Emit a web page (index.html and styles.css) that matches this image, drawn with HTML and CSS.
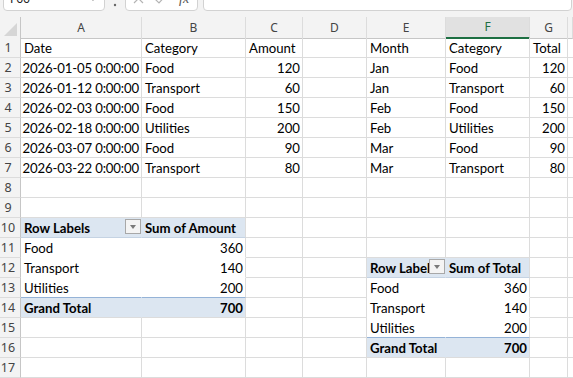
FILE: index.html
```html
<!DOCTYPE html>
<html>
<head>
  <title>Book1 - Excel</title>
  <link rel="stylesheet" href="styles.css">
</head>
<body>
  <div class="toolbar">
    <div class="namebox">
      <span>F66</span>
      <svg class="chev" width="8" height="6" viewBox="0 0 8 6"><path d="M1 1 L4 4 L7 1" fill="none" stroke="#555" stroke-width="1.2"/></svg>
    </div>
    <svg class="dots" width="6" height="24" viewBox="0 0 6 24"><circle cx="3" cy="10" r="1.2" fill="#666"/><circle cx="3" cy="18" r="1.2" fill="#666"/></svg>
    <div class="fxbox">
      <svg width="72" height="24" viewBox="0 0 72 24">
        <path d="M8 7 L17 16 M17 7 L8 16" stroke="#b4b4b4" stroke-width="1.2" fill="none"/>
        <path d="M29 12 L33 16 L41 7" stroke="#b4b4b4" stroke-width="1.2" fill="none"/>
        <text x="53" y="16" class="fx">fx</text>
      </svg>
    </div>
    <div class="formula"></div>
  </div>

  <div class="sheet">
    <div class="row head">
      <div class="corner"><svg width="13" height="13" viewBox="0 0 13 13"><path d="M13 0 L13 13 L0 13 Z" fill="#d6d6d6"/></svg></div>
      <div class="col">A</div>
      <div class="col">B</div>
      <div class="col">C</div>
      <div class="col">D</div>
      <div class="col">E</div>
      <div class="col sel">F</div>
      <div class="col">G</div>
      <div class="col"></div>
    </div>

    <div class="row">
      <div class="rn">1</div>
      <div class="c">Date</div><div class="c">Category</div><div class="c">Amount</div><div class="c"></div>
      <div class="c">Month</div><div class="c">Category</div><div class="c">Total</div><div class="c"></div>
    </div>
    <div class="row">
      <div class="rn">2</div>
      <div class="c num date">2026-01-05 0:00:00</div><div class="c">Food</div><div class="c num">120</div><div class="c"></div>
      <div class="c">Jan</div><div class="c">Food</div><div class="c num">120</div><div class="c"></div>
    </div>
    <div class="row">
      <div class="rn">3</div>
      <div class="c num date">2026-01-12 0:00:00</div><div class="c">Transport</div><div class="c num">60</div><div class="c"></div>
      <div class="c">Jan</div><div class="c">Transport</div><div class="c num">60</div><div class="c"></div>
    </div>
    <div class="row">
      <div class="rn">4</div>
      <div class="c num date">2026-02-03 0:00:00</div><div class="c">Food</div><div class="c num">150</div><div class="c"></div>
      <div class="c">Feb</div><div class="c">Food</div><div class="c num">150</div><div class="c"></div>
    </div>
    <div class="row">
      <div class="rn">5</div>
      <div class="c num date">2026-02-18 0:00:00</div><div class="c">Utilities</div><div class="c num">200</div><div class="c"></div>
      <div class="c">Feb</div><div class="c">Utilities</div><div class="c num">200</div><div class="c"></div>
    </div>
    <div class="row">
      <div class="rn">6</div>
      <div class="c num date">2026-03-07 0:00:00</div><div class="c">Food</div><div class="c num">90</div><div class="c"></div>
      <div class="c">Mar</div><div class="c">Food</div><div class="c num">90</div><div class="c"></div>
    </div>
    <div class="row">
      <div class="rn">7</div>
      <div class="c num date">2026-03-22 0:00:00</div><div class="c">Transport</div><div class="c num">80</div><div class="c"></div>
      <div class="c">Mar</div><div class="c">Transport</div><div class="c num">80</div><div class="c"></div>
    </div>
    <div class="row">
      <div class="rn">8</div>
      <div class="c"></div><div class="c"></div><div class="c"></div><div class="c"></div>
      <div class="c"></div><div class="c"></div><div class="c"></div><div class="c"></div>
    </div>
    <div class="row">
      <div class="rn">9</div>
      <div class="c"></div><div class="c"></div><div class="c"></div><div class="c"></div>
      <div class="c"></div><div class="c"></div><div class="c"></div><div class="c"></div>
    </div>
    <div class="row">
      <div class="rn">10</div>
      <div class="c pv-head pv-left">Row Labels<span class="dd"></span></div><div class="c pv-head">Sum of Amount</div><div class="c"></div><div class="c"></div>
      <div class="c"></div><div class="c"></div><div class="c"></div><div class="c"></div>
    </div>
    <div class="row">
      <div class="rn">11</div>
      <div class="c pv pv-left">Food</div><div class="c pv num">360</div><div class="c"></div><div class="c"></div>
      <div class="c"></div><div class="c"></div><div class="c"></div><div class="c"></div>
    </div>
    <div class="row">
      <div class="rn">12</div>
      <div class="c pv pv-left">Transport</div><div class="c pv num">140</div><div class="c"></div><div class="c"></div>
      <div class="c pv-head pv-left">Row Labels<span class="dd"></span></div><div class="c pv-head">Sum of Total</div><div class="c"></div><div class="c"></div>
    </div>
    <div class="row">
      <div class="rn">13</div>
      <div class="c pv pv-left pv-last">Utilities</div><div class="c pv pv-last num">200</div><div class="c"></div><div class="c"></div>
      <div class="c pv pv-left">Food</div><div class="c pv num">360</div><div class="c"></div><div class="c"></div>
    </div>
    <div class="row">
      <div class="rn">14</div>
      <div class="c pv-total pv-left">Grand Total</div><div class="c pv-total num">700</div><div class="c"></div><div class="c"></div>
      <div class="c pv pv-left">Transport</div><div class="c pv num">140</div><div class="c"></div><div class="c"></div>
    </div>
    <div class="row">
      <div class="rn">15</div>
      <div class="c"></div><div class="c"></div><div class="c"></div><div class="c"></div>
      <div class="c pv pv-left pv-last">Utilities</div><div class="c pv pv-last num">200</div><div class="c"></div><div class="c"></div>
    </div>
    <div class="row">
      <div class="rn">16</div>
      <div class="c"></div><div class="c"></div><div class="c"></div><div class="c"></div>
      <div class="c pv-total pv-left">Grand Total</div><div class="c pv-total num">700</div><div class="c"></div><div class="c"></div>
    </div>
    <div class="row">
      <div class="rn">17</div>
      <div class="c"></div><div class="c"></div><div class="c"></div><div class="c"></div>
      <div class="c"></div><div class="c"></div><div class="c"></div><div class="c"></div>
    </div>
  </div>
</body>
</html>
```

FILE: styles.css
```css
body {
  margin: 0;
  background: #f3f3f3;
  overflow: hidden;
  font-family: "Lato", "Liberation Sans", sans-serif;
}

.toolbar {
  display: flex;
  align-items: flex-end;
  height: 11px;
  padding-left: 3px;
  overflow: hidden;
}
.namebox,
.fxbox,
.formula {
  flex: none;
  height: 25px;
  box-sizing: border-box;
  background: #fff;
  border: 1px solid #d2d2d2;
  border-radius: 0 0 4px 4px;
}
.namebox {
  width: 102px;
  display: flex;
  align-items: center;
  justify-content: space-between;
  padding: 0 7px 0 6px;
  font-family: "Noto Sans", sans-serif;
  font-size: 12px;
  color: #222;
}
.dots {
  flex: none;
  margin: 0 7px 0 7px;
}
.fxbox {
  width: 73px;
}
.fx {
  font-family: "Liberation Serif", serif;
  font-style: italic;
  font-size: 14px;
  fill: #555;
}
.formula {
  width: 369px;
  margin-left: 5px;
}

.sheet {
  margin-top: 6px;
  background: #fff;
}
.row {
  display: grid;
  grid-template-columns: 21px 121px 104px 57px 64px 79px 84px 38px 1fr;
  height: 20px;
}
.row.head {
  height: 21px;
  background: #f3f3f3;
}
.corner {
  display: flex;
  align-items: flex-end;
  justify-content: flex-end;
  padding: 0 3px 2px 0;
  border-right: 1px solid #c6c6c6;
  border-bottom: 1px solid #c6c6c6;
}
.col {
  border-right: 1px solid #dcdcdc;
  border-bottom: 1px solid #c6c6c6;
  text-align: center;
  font-family: "Noto Sans", sans-serif;
  font-size: 12px;
  line-height: 21px;
  color: #444;
}
.col.sel {
  background: #e1e1e1;
  color: #1d6f42;
  border-bottom: 2px solid #1d6f42;
  line-height: 20px;
}
.rn {
  background: #f3f3f3;
  border-right: 1px solid #c6c6c6;
  border-bottom: 1px solid #dcdcdc;
  padding-right: 4px;
  text-align: center;
  font-family: "Noto Sans", sans-serif;
  font-size: 12.5px;
  line-height: 20px;
  color: #444;
  overflow: hidden;
}
.c {
  position: relative;
  border-right: 1px solid #dcdcdc;
  border-bottom: 1px solid #dcdcdc;
  padding: 0 3px;
  font-size: 13.2px;
  line-height: 20px;
  color: #000;
  white-space: nowrap;
  overflow: hidden;
}
.num {
  text-align: right;
  padding-right: 2px;
}
.date {
  padding-left: 0;
  letter-spacing: -0.15px;
}

/* pivot tables */
.pv {
  border-bottom-color: transparent;
}
.pv-left {
  border-right-color: transparent;
}
.pv-head {
  background: #dce6f1;
  border-bottom-color: #c5d3e3;
  font-weight: bold;
}
.pv-last {
  border-bottom-color: #95b3d7;
}
.pv-total {
  background: #dce6f1;
  font-weight: bold;
}
.dd {
  position: absolute;
  top: 1px;
  right: 0;
  width: 16px;
  height: 15px;
  box-sizing: border-box;
  border: 1px solid #a8a8a8;
  background: #f4f4f4;
}
.dd::after {
  content: "";
  position: absolute;
  left: 4px;
  top: 5px;
  border-left: 3px solid transparent;
  border-right: 3px solid transparent;
  border-top: 4px solid #7a7a7a;
}
```
